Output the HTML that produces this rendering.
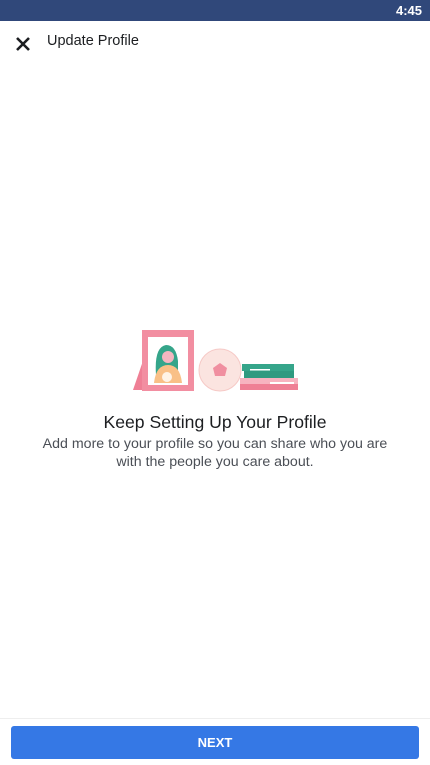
<!DOCTYPE html>
<html><head><meta charset="utf-8"><style>
body{margin:0;width:430px;height:765px;background:#fff;font-family:"Liberation Sans",Arial,sans-serif;position:relative;overflow:hidden}
.sb{position:absolute;left:0;top:0;width:430px;height:21px;background:#30487a;color:#fff;font-size:13px;font-weight:bold}
.sb span{position:absolute;right:8px;top:3px}
.hdr{position:absolute;top:33px;left:47px;font-size:14.5px;color:#1c1e21}
.x{position:absolute;left:15px;top:36px}
h1{position:absolute;top:412px;left:0;width:430px;text-align:center;font-size:17.6px;font-weight:normal;margin:0;color:#1c1e21}
p{position:absolute;top:435px;left:0;width:430px;text-align:center;font-size:14.2px;line-height:18px;margin:0;color:#4b4f56}
.line{position:absolute;top:718px;left:0;width:430px;height:1px;background:#eee}
.btn{position:absolute;left:11px;top:726px;width:408px;height:33px;background:#3578e5;border-radius:3px;color:#fff;font-size:13px;font-weight:bold;text-align:center;line-height:33px}
</style></head><body>
<div class="sb"><span>4:45</span></div>
<svg class="x" width="16" height="16" viewBox="0 0 16 16"><path d="M2 2L14 14M14 2L2 14" stroke="#1c1e21" stroke-width="2.6"/></svg>
<div class="hdr">Update Profile</div>
<svg style="position:absolute;left:130px;top:325px" width="175" height="70" viewBox="0 0 175 70">
<polygon points="3,65 15,30 25,65" fill="#ef7f95"/>
<rect x="12" y="5" width="52" height="61" fill="#f28ea1"/>
<rect x="18" y="12" width="40" height="48" fill="#fff"/>
<path d="M26 50 Q24 22 36 20 Q46 20 48 36 L48 58 L26 58Z" fill="#35a58a"/>
<circle cx="38" cy="32" r="6" fill="#f5b6c0"/>
<path d="M24 58 Q26 40 38 40 Q50 40 52 58Z" fill="#f9c087"/>
<circle cx="37" cy="52" r="5" fill="#fff3e6"/>
<circle cx="90" cy="45" r="21" fill="#fbe4e0" stroke="#f6c9c6" stroke-width="1"/>
<polygon points="90,38 97,43 95,51 85,51 83,43" fill="#f08fa0"/>
<rect x="112" y="39" width="52" height="7" fill="#35a58a"/>
<rect x="114" y="46" width="50" height="7" fill="#2f9a80"/>
<rect x="120" y="44" width="20" height="1.5" fill="#fff"/>
<rect x="110" y="53" width="58" height="6" fill="#f7b3c0"/>
<rect x="110" y="59" width="58" height="6" fill="#ef7f95"/>
<rect x="140" y="57" width="24" height="2" fill="#fff"/>
</svg>
<h1>Keep Setting Up Your Profile</h1>
<p>Add more to your profile so you can share who you are<br>with the people you care about.</p>
<div class="line"></div>
<div class="btn">NEXT</div>
</body></html>
